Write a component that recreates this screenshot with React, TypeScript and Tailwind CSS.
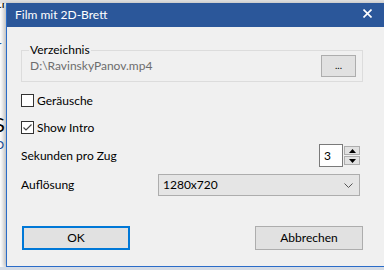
import React from 'react';

const font = { fontFamily: 'Lato, "Noto Sans", sans-serif' };

const Checkbox: React.FC<{ checked?: boolean; label: string }> = ({ checked, label }) => (
  <div className="flex items-center h-[13px]">
    <div className="w-[13px] h-[13px] border border-[#333333] bg-white flex items-center justify-center">
      {checked && (
        <svg width="11" height="11" viewBox="0 0 11 11">
          <polyline points="1.5,5.5 4,8 9.5,2.5" fill="none" stroke="#444" strokeWidth="1.2" />
        </svg>
      )}
    </div>
    <span className="ml-[3px] text-[12px] leading-none text-black">{label}</span>
  </div>
);

const SpinButton: React.FC<{ up?: boolean }> = ({ up }) => (
  <div className="w-[16px] h-[9px] bg-[#e1e1e1] border border-[#adadad] flex items-center justify-center">
    <svg width="7" height="4" viewBox="0 0 7 4">
      {up ? <polygon points="0,4 7,4 3.5,0" fill="#000" /> : <polygon points="0,0 7,0 3.5,4" fill="#000" />}
    </svg>
  </div>
);

export default function App() {
  return (
    <div className="w-[384px] h-[270px] overflow-hidden bg-[#fafafa] relative" style={font}>
      {/* window behind the dialog */}
      <div className="absolute left-0 top-0 w-[8px] h-[270px] overflow-hidden bg-white">
        <span className="absolute left-[-4px] top-[-5px] text-[12px] text-black">ch</span>
        <span className="absolute left-[-3px] top-[36px] text-[12px] text-[#1a4fa0]">r</span>
        <span className="absolute left-[-6px] top-[109px] text-[20px] text-black">S</span>
        <span className="absolute left-[-5px] top-[136px] text-[12px] text-[#1a4fa0]">D</span>
      </div>
      <div className="absolute left-0 top-0 w-[384px] h-[3px] bg-[#e3e3e3]" />

      {/* dialog */}
      <div className="absolute left-[6px] top-[3px] w-[392px] flex flex-col border-l border-b border-[#2a6cc8] shadow-[-2px_1px_5px_rgba(0,0,0,0.3)]">
        <div className="h-[24px] bg-[#2b579a] flex items-center pl-[8px]">
          <span className="text-[12px] text-white leading-none">Film mit 2D-Brett</span>
          <svg className="ml-auto mr-[26px] mb-[4px]" width="9" height="9" viewBox="0 0 9 9">
            <path d="M0.5 0.5 L8.5 8.5 M8.5 0.5 L0.5 8.5" stroke="#fff" strokeWidth="1.6" />
          </svg>
        </div>

        <div className="h-[239px] bg-[#f0f0f0] pl-[14px] pt-[23px] flex flex-col">
          {/* group box */}
          <div className="relative w-[342px] h-[32px] border border-[#dcdcdc] flex items-center pl-[8px] pr-[6px]">
            <span className="absolute left-[7px] top-[-9px] px-[1px] bg-[#f0f0f0] text-[12px] leading-[16px] text-black">
              Verzeichnis
            </span>
            <span className="text-[12px] text-[#6d6d6d] leading-none">D:\RavinskyPanov.mp4</span>
            <div className="ml-auto w-[35px] h-[22px] bg-[#e1e1e1] border border-[#adadad] flex items-center justify-center">
              <span className="text-[10px] leading-none text-black mb-[2px]">...</span>
            </div>
          </div>

          <div className="mt-[12px]">
            <Checkbox label="Geräusche" />
          </div>
          <div className="mt-[14px]">
            <Checkbox checked label="Show Intro" />
          </div>

          <div className="mt-[10px] h-[23px] flex items-center w-[339px]">
            <span className="text-[12px] text-black leading-none">Sekunden pro Zug</span>
            <div className="ml-auto flex items-center">
              <div className="w-[24px] h-[23px] bg-white border border-[#7a7a7a] flex items-center pl-[4px]">
                <span className="text-[12px] leading-none text-black">3</span>
              </div>
              <div className="flex flex-col gap-[1px] ml-[1px]">
                <SpinButton up />
                <SpinButton />
              </div>
            </div>
          </div>

          <div className="mt-[7px] h-[22px] flex items-center w-[339px]">
            <span className="text-[12px] text-black leading-none">Auflösung</span>
            <div className="ml-auto w-[202px] h-[22px] bg-[#e5e5e5] border border-[#adadad] flex items-center pl-[4px] pr-[6px]">
              <span className="text-[12px] leading-none text-black">1280x720</span>
              <svg className="ml-auto" width="9" height="5" viewBox="0 0 9 5">
                <polyline points="0.5,0.5 4.5,4.5 8.5,0.5" fill="none" stroke="#555" strokeWidth="1" />
              </svg>
            </div>
          </div>

          <div className="mt-[30px] flex w-[342px]">
            <div className="ml-[1px] w-[108px] h-[24px] bg-[#e1e1e1] border-2 border-[#0078d7] flex items-center justify-center">
              <span className="text-[12px] leading-none text-black">OK</span>
            </div>
            <div className="ml-auto w-[108px] h-[24px] bg-[#e1e1e1] border border-[#adadad] flex items-center justify-center">
              <span className="text-[12px] leading-none text-black">Abbrechen</span>
            </div>
          </div>
        </div>
      </div>
      <div className="absolute left-0 top-[267px] w-[384px] h-[3px] bg-[#d4dbe5]" />
    </div>
  );
}
